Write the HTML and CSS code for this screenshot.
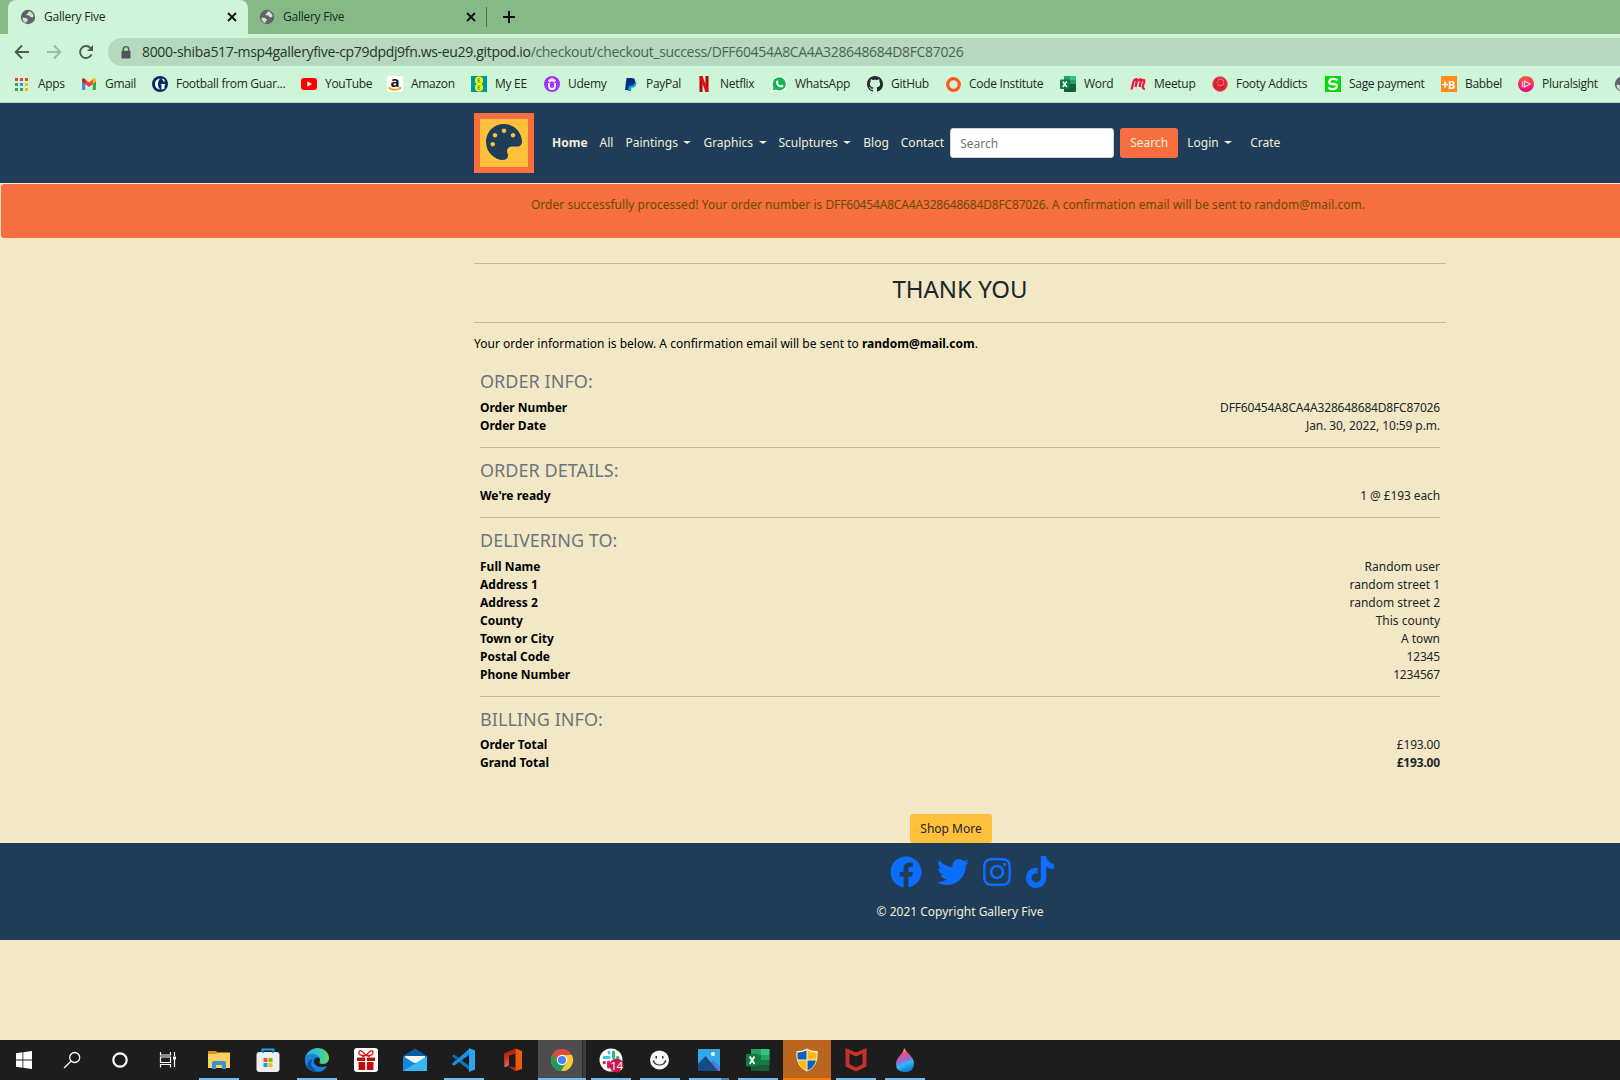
FILE: index.html
```html
<!DOCTYPE html>
<html lang="en">
<head>
<meta charset="utf-8">
<title>Gallery Five</title>
<link rel="stylesheet" href="styles.css">
</head>
<body>
<svg class="defs" width="0" height="0">
  <symbol id="globe" viewBox="0 0 16 16"><circle cx="8" cy="8" r="7.2" fill="#5f6368"/><path class="land" d="M2.6 8.6 6 9l2 1.6-.6 1.5-1 .4v1.6C4 13.500 2.200 11 2.600 8.600zM8.500 2.300c2.800.4 4.900 2.400 5.200 4.900l-1.300 1.200-2-.4L9.300 6.500 7 6.300 6.300 5l2-.9z"/></symbol>
  <symbol id="close" viewBox="0 0 10 10"><path d="M1 1l8 8M9 1l-8 8" stroke="#111" stroke-width="1.9"/></symbol>
</svg>

<div class="tabs">
  <div class="tab active"><svg class="fav"><use href="#globe"/></svg><span>Gallery Five</span><svg class="x"><use href="#close"/></svg></div>
  <div class="tab"><svg class="fav"><use href="#globe"/></svg><span>Gallery Five</span><svg class="x"><use href="#close"/></svg></div>
  <i class="divider"></i>
  <svg class="plus" viewBox="0 0 12 12"><path d="M6 0v12M0 6h12" stroke="#111" stroke-width="2"/></svg>
</div>

<div class="toolbar">
  <svg class="tool" viewBox="0 0 16 16"><path d="M15 8H2M8 1.500 1.700 8 8 14.500" fill="none" stroke="#50585a" stroke-width="1.900"/></svg>
  <svg class="tool" viewBox="0 0 16 16"><path d="M1 8h13M8 1.500 14.300 8 8 14.500" fill="none" stroke="#9eb9a4" stroke-width="1.900"/></svg>
  <svg class="tool" viewBox="0 0 16 16"><path d="M13.600 10.300A6 6 0 1 1 12.400 3.900" fill="none" stroke="#50585a" stroke-width="1.900"/><path d="M15 1v6H9z" fill="#50585a"/></svg>
  <div class="omnibox">
    <svg class="lock" viewBox="0 0 10 13"><path d="M2.200 6V3.400a2.800 2.800 0 0 1 5.600 0V6" fill="none" stroke="#505558" stroke-width="1.400"/><rect x=".5" y="4.800" width="9" height="7.700" rx="1" fill="#505558"/></svg>
    <span class="url"><b>8000-shiba517-msp4galleryfive-cp79dpdj9fn.ws-eu29.gitpod.io</b>/checkout/checkout_success/DFF60454A8CA4A328648684D8FC87026</span>
  </div>
</div>

<div class="bookmarks">
  <a><svg viewBox="0 0 16 16"><path fill="#ea4335" d="M1 2h3v3H1zM6 2h3v3H6zM11 2h3v3h-3z"/><path fill="#34a853" d="M1 7h3v3H1zM1 12h3v3H1z"/><path fill="#4285f4" d="M6 7h3v3H6z"/><path fill="#fbbc04" d="M11 7h3v3h-3zM11 12h3v3h-3z"/><path fill="#34a853" d="M6 12h3v3H6z"/></svg>Apps</a>
  <a><svg viewBox="0 0 16 16"><path fill="#4285f4" d="M1 4l3.300 2.500V14H2q-1 0-1-1z"/><path fill="#34a853" d="M15 4l-3.300 2.500V14H14q1 0 1-1z"/><path fill="#ea4335" d="M3 2.500l5 4 5-4v4.700l-5 3.800-5-3.800z"/><path fill="#c5221f" d="M1 4q0-3 3.300-1v5L1 5.500z"/><path fill="#fbbc04" d="M15 4q0-3-3.300-1v5L15 5.500z"/></svg>Gmail</a>
  <a><svg viewBox="0 0 16 16"><circle cx="8" cy="8" r="8" fill="#052962"/><path d="M8.500 2.500Q3 3 3 8t5.500 5.500Q6 12 6 8t2.500-5.500zM9.500 2.500q2 .3 3 1.200v2.200h-.7Q11 3.500 9.500 2.700zM8.500 8h4.800v.6l-.8.4v3.400q-1.300.9-3 1.100V8.900z" fill="#fff"/></svg>Football from Guar...</a>
  <a><svg viewBox="0 0 16 16"><rect y="2" width="16" height="12" rx="3" fill="#f00"/><path d="M6.300 5.300v5.400L11 8z" fill="#fff"/></svg>YouTube</a>
  <a><svg viewBox="0 0 16 16"><rect width="16" height="16" rx="2" fill="#fff"/><text x="3.600" y="10.500" font-size="15" font-weight="700" fill="#111">a</text><path d="M1.500 11.500q6 4.500 12 .6" fill="none" stroke="#f90" stroke-width="1.600"/><path d="M11.500 11.200l3-.4-.8 3z" fill="#f90"/></svg>Amazon</a>
  <a><svg viewBox="0 0 16 16"><path fill="#00979d" d="M0 0h16v16H0z"/><circle cx="8" cy="4.500" r="4" fill="#fdf200"/><circle cx="8" cy="11.500" r="4" fill="#fdf200"/><path d="M9.500 2.800H7v3.300h2.500M7 4.500h2M9.500 9.900H7v3.300h2.500M7 11.500h2" stroke="#5aa66a" fill="none"/></svg>My EE</a>
  <a><svg viewBox="0 0 16 16"><circle cx="8" cy="8" r="8" fill="#a435f0"/><path d="M5 7v3q0 3 3 3t3-3V7M5 5.800 8 4l3 1.800" stroke="#fff" stroke-width="1.800" fill="none"/><path d="M4 4.700 8 2.500l4 2.200" stroke="#fff" fill="none"/></svg>Udemy</a>
  <a><svg viewBox="0 0 16 16"><path d="M6 5h7q2 1 1 4-1 2.800-4.500 2.800L9 15H5.500z" fill="#179bd7"/><path d="M4.500 2H10q3.700.3 3 4-.8 3.700-4.800 3.800H7L6.200 14H3z" fill="#002f86"/></svg>PayPal</a>
  <a><svg viewBox="0 0 16 16"><path d="M3.500 0h3v16h-3zM9.500 0h3v16h-3z" fill="#b1060f"/><path d="M3.500 0h3l6 16h-3z" fill="#e50914"/></svg>Netflix</a>
  <a><svg viewBox="0 0 16 16"><path d="M.3 15.700l1.200-4.500A7.700 7.700 0 1 1 5 14.700z" fill="#fff"/><circle cx="8.200" cy="7.900" r="6.600" fill="#12b84b"/><path d="M1.500 14.500l1.300-4 2.600 2.800z" fill="#12b84b"/><path d="M5.700 4.500l1.200-.1.700 2-.7.9q1 1.700 2.700 2.300l.9-1 2 .9q-.2 2-2.500 2Q6 10.500 5 7.200q-.2-1.800.7-2.700z" fill="#fff"/></svg>WhatsApp</a>
  <a><svg viewBox="0 0 16 16"><path fill="#24292f" d="M8 0C3.580 0 0 3.580 0 8c0 3.540 2.290 6.530 5.470 7.590.4.070.55-.17.55-.38 0-.19-.01-.82-.01-1.490-2.010.37-2.530-.49-2.690-.94-.09-.23-.48-.94-.82-1.130-.28-.15-.68-.52-.01-.53.63-.01 1.080.58 1.230.82.72 1.210 1.870.87 2.330.66.070-.52.28-.87.51-1.070-1.780-.2-3.640-.89-3.640-3.950 0-.87.31-1.590.82-2.150-.08-.2-.36-1.020.08-2.120 0 0 .67-.21 2.200.82.64-.18 1.320-.27 2-.27s1.360.09 2 .27c1.530-1.040 2.200-.82 2.200-.82.44 1.100.16 1.920.08 2.120.51.56.82 1.270.82 2.150 0 3.070-1.870 3.750-3.650 3.950.29.25.54.73.54 1.480 0 1.070-.01 1.930-.01 2.200 0 .21.15.46.55.38A8.010 8.010 0 0 0 16 8c0-4.420-3.580-8-8-8z"/></svg>GitHub</a>
  <a><svg viewBox="0 0 16 16"><circle cx="8.500" cy="8.500" r="5.800" fill="none" stroke="#ff5722" stroke-width="3.200"/></svg>Code Institute</a>
  <a><svg viewBox="0 0 16 16"><rect x="4" width="12" height="16" rx="1" fill="#185c37"/><path fill="#21a366" d="M4 0h6v4H4z"/><path fill="#33c481" d="M10 0h6v4h-6z"/><path fill="#107c41" d="M4 4h6v8H4z"/><path fill="#21a366" d="M10 4h6v4h-6z"/><rect y="3.500" width="9.500" height="9.500" rx="1" fill="#107c41"/><path d="M2.800 5.500l4 5.500M6.800 5.500l-4 5.500" stroke="#fff" stroke-width="1.500"/></svg>Word</a>
  <a><svg viewBox="0 0 16 16"><path d="M1.500 13.500 4 4.500q3.200-2.500 3 0L5.500 11M7.500 5q3.700-3.200 3.500-.5L9.500 11M11.300 5q3.500-2.500 3 .5l-1.500 5q-.5 2 2 2.500" fill="none" stroke="#ed1c40" stroke-width="2.300"/></svg>Meetup</a>
  <a><svg viewBox="0 0 16 16"><circle cx="8" cy="8" r="7.500" fill="#dc2637" stroke="#e9808a"/><circle cx="8.500" cy="6.500" r="3.300" fill="none" stroke="#f0808b"/><path d="M3 12q1-6 3-4M9 11l4 2M3 4l3 1" stroke="#b61c2d" fill="none"/></svg>Footy Addicts</a>
  <a><svg viewBox="0 0 16 16"><path fill="#00dc06" d="M0 0h16v16H0z"/><path d="M12.500 4.600Q11 2.800 8 2.800T4.300 5.300 8 8t3.900 2.600T8 13.200t-4.600-2" stroke="#fff" stroke-width="2.300" fill="none"/></svg>Sage payment</a>
  <a><svg viewBox="0 0 16 16"><path fill="#ff8c14" d="M0 0h16v16H0z"/><path d="M1 8.500h6M4 5.500v6" stroke="#fff" stroke-width="1.700"/><text x="7" y="12.500" font-size="11" font-weight="700" fill="#fff">B</text></svg>Babbel</a>
  <a><svg viewBox="0 0 16 16"><defs><linearGradient id="ps" x2="0" y2="1"><stop stop-color="#f0603a"/><stop offset="1" stop-color="#ec008c"/></linearGradient></defs><circle cx="8" cy="8" r="8" fill="url(#ps)"/><path d="M6.500 5l5.500 3-5.500 3zM4.500 5.500v5l1-.5" fill="none" stroke="#ffd5dc" stroke-width="1.200"/></svg>Pluralsight</a>
  <a><svg viewBox="0 0 16 16"><use href="#globe" width="16" height="16"/></svg></a>
</div>

<header class="navbar">
  <div class="logo"><svg viewBox="0 0 512 512"><path fill="#1f3d58" d="M204.300 5C104.900 24.400 24.800 104.300 5.200 203.400c-37 187 131.700 326.400 258.800 306.700 41.200-6.400 61.400-54.600 42.500-91.700-23.100-45.400 9.900-98.400 60.900-98.400h79.700c35.800 0 64.800-29.600 64.900-65.300C511.500 97.100 368.100-26.900 204.300 5zM96 320c-17.700 0-32-14.300-32-32s14.300-32 32-32 32 14.300 32 32-14.300 32-32 32zm32-128c-17.700 0-32-14.300-32-32s14.300-32 32-32 32 14.300 32 32-14.300 32-32 32zm128-64c-17.700 0-32-14.300-32-32s14.300-32 32-32 32 14.300 32 32-14.300 32-32 32zm128 64c-17.700 0-32-14.300-32-32s14.300-32 32-32 32 14.300 32 32-14.300 32-32 32z"/></svg></div>
  <nav>
    <a class="home">Home</a><a>All</a><a class="drop">Paintings</a><a class="drop">Graphics</a><a class="drop">Sculptures</a><a>Blog</a><a>Contact</a>
  </nav>
  <input class="search" placeholder="Search">
  <button class="btn-search">Search</button>
  <nav class="account"><a class="drop">Login</a><a>Crate</a></nav>
</header>

<div class="alert"><span>Order successfully processed! Your order number is <span class="num">DFF60454A8CA4A328648684D8FC87026</span>. A confirmation email will be sent to random@mail.com.</span></div>

<main>
  <h2>THANK YOU</h2>
  <p class="intro">Your order information is below. A confirmation email will be sent to <strong>random@mail.com</strong>.</p>
  <section><h4>ORDER INFO:</h4>
    <div class="row"><b>Order Number</b><span class="num">DFF60454A8CA4A328648684D8FC87026</span></div>
    <div class="row"><b>Order Date</b><span class="date">Jan. 30, 2022, 10:59 p.m.</span></div>
  </section>
  <section><h4>ORDER DETAILS:</h4>
    <div class="row"><b>We're ready</b><span class="date">1 @ £193 each</span></div>
  </section>
  <section><h4>DELIVERING TO:</h4>
    <div class="row"><b>Full Name</b><span>Random user</span></div>
    <div class="row"><b>Address 1</b><span>random street 1</span></div>
    <div class="row"><b>Address 2</b><span>random street 2</span></div>
    <div class="row"><b>County</b><span>This county</span></div>
    <div class="row"><b>Town or City</b><span>A town</span></div>
    <div class="row"><b>Postal Code</b><span class="num">12345</span></div>
    <div class="row"><b>Phone Number</b><span class="num">1234567</span></div>
  </section>
  <section><h4>BILLING INFO:</h4>
    <div class="row"><b>Order Total</b><span class="num">£193.00</span></div>
    <div class="row"><b>Grand Total</b><b class="total num">£193.00</b></div>
  </section>
  <button class="shop">Shop More</button>
</main>

<footer>
  <div class="social">
    <svg width="32" viewBox="0 0 512 512"><path d="M504 256C504 119 393 8 256 8S8 119 8 256c0 123.780 90.690 226.380 209.250 245V327.690h-63V256h63v-54.640c0-62.150 37-96.480 93.670-96.480 27.140 0 55.520 4.840 55.520 4.840v61h-31.280c-30.800 0-40.410 19.120-40.410 38.730V256h68.780l-11 71.690h-57.780V501C413.310 482.380 504 379.780 504 256z"/></svg>
    <svg width="32" viewBox="0 0 512 512"><path d="M459.370 151.716c.325 4.548.325 9.097.325 13.645 0 138.720-105.583 298.558-298.558 298.558-59.452 0-114.680-17.219-161.137-47.106 8.447.974 16.568 1.299 25.340 1.299 49.055 0 94.213-16.568 130.274-44.832-46.132-.975-84.792-31.188-98.112-72.772 6.498.974 12.995 1.624 19.818 1.624 9.421 0 18.843-1.300 27.614-3.573-48.081-9.747-84.143-51.980-84.143-102.985v-1.299c13.969 7.797 30.214 12.670 47.431 13.319-28.264-18.843-46.781-51.005-46.781-87.391 0-19.492 5.197-37.360 14.294-52.954 51.655 63.675 129.300 105.258 216.365 109.807-1.624-7.797-2.599-15.918-2.599-24.040 0-57.828 46.782-104.934 104.934-104.934 30.213 0 57.502 12.670 76.670 33.137 23.715-4.548 46.456-13.320 66.599-25.340-7.798 24.366-24.366 44.833-46.132 57.827 21.117-2.273 41.584-8.122 60.426-16.243-14.292 20.791-32.161 39.308-52.628 54.253z"/></svg>
    <svg width="28" viewBox="0 0 448 512"><path d="M224.100 141c-63.600 0-114.900 51.300-114.900 114.900s51.300 114.900 114.900 114.900S339 319.500 339 255.900 287.700 141 224.100 141zm0 189.600c-41.100 0-74.700-33.500-74.700-74.700s33.500-74.700 74.700-74.700 74.700 33.500 74.700 74.700-33.600 74.700-74.700 74.700zm146.400-194.300c0 14.900-12 26.800-26.800 26.800-14.900 0-26.800-12-26.800-26.800s12-26.800 26.800-26.800 26.800 12 26.800 26.800zm76.100 27.200c-1.700-35.900-9.900-67.700-36.200-93.900-26.200-26.200-58-34.400-93.900-36.200-37-2.100-147.900-2.100-184.900 0-35.800 1.700-67.600 9.900-93.900 36.100s-34.400 58-36.200 93.900c-2.100 37-2.100 147.900 0 184.900 1.700 35.900 9.900 67.700 36.200 93.900s58 34.400 93.900 36.200c37 2.100 147.900 2.100 184.900 0 35.900-1.700 67.700-9.900 93.900-36.200 26.200-26.200 34.400-58 36.200-93.900 2.100-37 2.100-147.800 0-184.800zM398.800 388c-7.800 19.600-22.900 34.700-42.600 42.600-29.500 11.700-99.500 9-132.100 9s-102.700 2.600-132.100-9c-19.600-7.800-34.700-22.900-42.600-42.600-11.700-29.500-9-99.500-9-132.100s-2.600-102.700 9-132.100c7.800-19.600 22.900-34.700 42.600-42.600 29.500-11.700 99.500-9 132.100-9s102.700-2.600 132.100 9c19.600 7.800 34.700 22.900 42.600 42.600 11.700 29.500 9 99.500 9 132.100s2.700 102.700-9 132.100z"/></svg>
    <svg width="28" viewBox="0 0 448 512"><path d="M448 209.910a210.060 210.060 0 0 1-122.770-39.250V349.380A162.550 162.550 0 1 1 185 188.310V278.200a74.620 74.620 0 1 0 52.230 71.180V0h88a121.180 121.180 0 0 0 1.860 22.170A122.180 122.180 0 0 0 381 102.390a121.430 121.430 0 0 0 67 20.140z"/></svg>
  </div>
  <p>© 2021 Copyright Gallery Five</p>
</footer>

<div class="taskbar">
  <div class="sys"><svg viewBox="0 0 24 24"><path fill="#fff" d="M4 5.200 10.500 4.300v7.200H4zM11.300 4.200 20 3v8.500h-8.700zM4 12.400h6.500v7.300L4 18.800zM11.300 12.400H20V21l-8.700-1.200z"/></svg></div>
  <div class="sys"><svg viewBox="0 0 24 24"><g fill="none" stroke="#fff" stroke-width="1.300"><circle cx="14.700" cy="9.500" r="5"/><path d="M11.200 13 4 20"/></g></svg></div>
  <div class="sys"><svg viewBox="0 0 24 24"><circle cx="12" cy="12" r="6.700" fill="none" stroke="#fff" stroke-width="2.200"/></svg></div>
  <div class="sys"><svg viewBox="0 0 24 24"><g fill="none" stroke="#fff" stroke-width="1.200"><path d="M4.500 4v3h10V4M4.500 19.500v-3h10v3M4.500 9h10v5.500h-10zM18.500 4v4M18.500 11.500V19"/></g><path fill="#fff" d="M17 8.500h3v3h-3z"/></svg></div>

  <div class="app run"><svg viewBox="0 0 24 24"><path fill="#d99411" d="M1 3h8l2 2v3H1z"/><path fill="#ffd160" d="M1 6h8l2-1.500h12V20H1z"/><path fill="#3c8fd2" d="M5 21v-6q0-2 2-2h10q2 0 2 2v6h-4v-4H9v4z"/></svg></div>
  <div class="app"><svg viewBox="0 0 24 24"><path d="M6.500 6V1.500h11V6" fill="none" stroke="#20a4e8" stroke-width="2"/><rect x=".5" y="4" width="23" height="20" rx="3" fill="#eee"/><path d="M7 5V2M17 5V2" stroke="#0f7fc8" stroke-width="1.800"/><path fill="#f25022" d="M7.500 10h4v4h-4z"/><path fill="#7fba00" d="M12.500 10h4v4h-4z"/><path fill="#00a4ef" d="M7.500 15h4v4h-4z"/><path fill="#ffb900" d="M12.500 15h4v4h-4z"/></svg></div>
  <div class="app run"><svg viewBox="0 0 24 24"><defs><linearGradient id="e1"><stop stop-color="#2aa7e4"/><stop offset=".6" stop-color="#36c9bd"/><stop offset="1" stop-color="#63d95a"/></linearGradient></defs><path d="M0 12C0 5 6 0 12.500 0 19 0 24 4.500 24 10c0 4-3 6-6.500 6-2.500 0-3.500-1-3-2 1.200-2 .8-6-4.500-6Q4 8 0 12z" fill="url(#e1)"/><path d="M0 12q1-6 7-6 6.500 0 8 5Q13 8.500 10.500 10 8 12 9.500 15.500 12 20 19 18.700q3-1 3-.2-3.500 5.500-9.500 5.500Q0 23.500 0 12z" fill="#1683d8"/><path d="M7.500 11q-3 5 .5 9 3 3.500 7 3.500-8 2-12.500-5Q2 12 7.500 11z" fill="#0b529e"/></svg></div>
  <div class="app"><svg viewBox="0 0 24 24"><rect width="24" height="24" rx="3" fill="#fff"/><path fill="#b90f0f" d="M3 9.500h8.200V13H3zM12.800 9.500H21V13h-8.200zM4.500 14h6.700v8H4.500zM12.800 14h6.700v8h-6.700z"/><path d="M12 7.500Q4 8 5 4t7 3.500q6-7.500 7-3.500t-7 3.500zM11.500 7.500 8 9M12.500 7.500 16 9" fill="none" stroke="#d11" stroke-width="1.300"/></svg></div>
  <div class="app"><svg viewBox="0 0 24 24"><path fill="#0c59a4" d="M0 8 12 .5 24 8v4H0z"/><path fill="#f5f5f5" d="M2 8h20v7H2z"/><path fill="#1687d8" d="M0 8l12 7.500V23H0z"/><path fill="#36b8f2" d="M24 8 0 23h24z"/></svg></div>
  <div class="app run"><svg viewBox="0 0 24 24"><path fill="#0b75bc" d="M0 8l2-1.500 16 12V23L1 9zM0 16l2 1.500 5-4-2-3z"/><path fill="#1d8fdb" d="M0 16 17 1v6L2 17.500z"/><path fill="#2aa5f0" d="M17 0l6 2.500v19L17 24z"/></svg></div>
  <div class="app"><svg viewBox="0 0 24 24"><defs><linearGradient id="of" x2="0" y2="1"><stop stop-color="#a51c12"/><stop offset=".6" stop-color="#d83b1a"/><stop offset="1" stop-color="#e36a7a"/></linearGradient></defs><path fill="url(#of)" d="M3 5.500 14.500.5v5L8 7.500v10L3.500 19.500z"/><path fill="#c5281c" d="M7 18.500l7.500 1V23z"/><path fill="#ee5a0b" d="M14.500.5 21 3v18l-6.500 2z"/></svg></div>
  <div class="app run current"><svg viewBox="0 0 24 24"><circle cx="12" cy="12" r="11" fill="#4caf50"/><path fill="#e04a3c" d="M2.500 6.500A11 11 0 0 1 21.500 6.500L12 7.500l-4 7z"/><path fill="#fcc934" d="M12 7h9.800A11 11 0 0 1 11 23l6-8.500z"/><path fill="#1f9d58" d="M2.500 6.500 7.700 14.500Q10 17.500 14 17L11 23A11 11 0 0 1 2.500 6.500z"/><circle cx="12" cy="12" r="5.200" fill="#fff"/><circle cx="12" cy="12" r="4.100" fill="#4285f4"/></svg></div>
  <div class="app run"><svg viewBox="0 0 24 24"><circle cx="12" cy="12" r="11.500" fill="#fff"/><g stroke-width="3" stroke-linecap="round"><path d="M5 9.500h5M10 4v1" stroke="#36c5f0"/><path d="M14.500 4v5.500M18.500 9.500h.5" stroke="#2eb67d"/><path d="M9.500 14v5M5 14.500h.5" stroke="#e01e5a"/></g><circle cx="17.500" cy="17.500" r="7" fill="#c9184f"/><text x="11.400" y="21.500" font-size="11" fill="#fff">14</text></svg></div>
  <div class="app run"><svg viewBox="0 0 24 24"><circle cx="11.500" cy="12" r="9.500" fill="#f7f7f7"/><g fill="none" stroke="#333" stroke-width="1.200"><path d="M5.500 13q1.500 4 6 4t6-4M4.800 13.500l1.500-1M18.200 13.500l-1.500-1"/></g><path d="M7.500 8H9v2.500H7.500zM14 8h1.500v2.500H14z" fill="#333"/></svg></div>
  <div class="app run photos"><svg viewBox="0 0 24 24"><path fill="#31a8ec" d="M1 1h22v22H1z"/><path fill="#4f78cf" d="M12 16l4-4 7 7v4h-8z"/><path fill="#174b86" d="M1 16l7.500-8L21 23H1z"/><circle cx="16" cy="6" r="2" fill="#fff"/></svg></div>
  <div class="app run"><svg viewBox="0 0 24 24"><path fill="#185c37" d="M5 1h18.500v22H5z"/><path fill="#21a366" d="M5 1h9.500v6H5zM14.500 7h9v5h-9z"/><path fill="#33c481" d="M14.500 1h9v6h-9z"/><path fill="#107c41" d="M5 7h9.500v10H5zM14.500 12h9v5h-9z"/><path fill="#117a40" d="M0 6h12v12.500H0z"/><path d="M3.700 8.500l4.800 7.500M8.500 8.500 3.700 16" stroke="#fff" stroke-width="1.800"/></svg></div>
  <div class="app run alerting"><svg viewBox="0 0 24 24"><path fill="#fff3c4" d="M12 .5q5 3 10.500 2.500Q24 18 12 23.500 0 18 1.500 3 7 3.500 12 .5z"/><path fill="#0b5fc0" d="M11.500 2.200q-4.500 2.500-9 2.200-.4 4 .4 7h8.600z"/><path fill="#fdb813" d="M12.500 2.200q4.500 2.500 9 2.200.4 4-.4 7h-8.600zM3 12.500h8.500v10q-6.500-3-8.500-10z"/><path fill="#0b5fc0" d="M21 12.500h-8.500v10q6.500-3 8.500-10z"/></svg></div>
  <div class="app run"><svg viewBox="0 0 24 24"><path fill="#c9302c" d="M1.500 0 12 4.500 22.500 0v18.500L12 23.500 1.500 18.500zM5.500 5.500v10.800L12 19.500l6.500-3.200V5.500L12 8.500z"/></svg></div>
  <div class="app run"><svg viewBox="0 0 24 24"><defs><linearGradient id="pt" x2=".3" y2="1"><stop offset=".15" stop-color="#ffca1f"/><stop offset=".35" stop-color="#f0468d"/><stop offset=".6" stop-color="#8f6fd8"/><stop offset=".75" stop-color="#35b8f5"/><stop offset="1" stop-color="#1683d8"/></linearGradient></defs><path fill="url(#pt)" d="M11 0q2 3 5 6 5 5 5 9.500 0 8.500-9 8.500t-9-8q0-4 4-8.500 4-4 4-7.500z"/></svg></div>
</div>
</body>
</html>
```
FILE: styles.css
```css
* { box-sizing: border-box; }
body {
  margin: 0;
  height: 1080px;
  overflow: hidden;
  display: flex;
  flex-direction: column;
  background: #f2e8c6;
  font: 12px/18px "Noto Sans", sans-serif;
  color: #212529;
}
svg { display: block; flex: none; overflow: visible; }
.defs { position: absolute; }
p, h2, h4 { margin: 0; font-weight: 400; }

/* browser window */
.tabs, .toolbar, .bookmarks {
  flex: none;
  display: flex;
  align-items: center;
  font-family: "Open Sans", sans-serif;
  color: #1c2a20;
}
.tabs { height: 34px; padding-left: 8px; background: #85b985; }
.tab { display: flex; align-items: center; width: 239px; height: 34px; padding: 0 11px 0 11px; letter-spacing: -.25px; }
.tab.active { padding-left: 12px; background: #cef5d8; border-radius: 8px 8px 0 0; width: 240px; }
.tab span { flex: 1; margin-left: 8px; }
.fav { width: 16px; height: 16px; }
.land { fill: #cfe4d1; }
.x { width: 10px; height: 10px; }
.divider { width: 1px; height: 20px; margin: 0 16px 0 -1px; background: #4c6f50; }
.plus { width: 12px; height: 12px; }
.toolbar { height: 34px; padding: 2px 0 0 14px; background: #cef5d8; gap: 16px; }
.tool { width: 16px; height: 16px; }
.omnibox { flex: 1; height: 28px; margin: 0 -20px 0 -2px; padding-left: 13px; display: flex; align-items: center; gap: 11px; background: #b6d8bc; border-radius: 14px 0 0 14px; }
.lock { width: 10px; height: 13px; }
.url { font-size: 14px; letter-spacing: -.328px; white-space: nowrap; color: #4d6455; }
.url b { font-weight: 400; color: #26352b; }
.bookmarks { height: 35px; padding: 0 0 2px 14px; border-bottom: 1px solid #b2d3b9; background: #cef5d8; }
.bookmarks a { flex: none; display: flex; align-items: center; gap: 8px; letter-spacing: -.3px; white-space: nowrap; }
.bookmarks svg { width: 16px; height: 16px; font-family: "Open Sans", sans-serif; letter-spacing: 0; }
.bookmarks a:nth-child(1) { width: 67px; }
.bookmarks a:nth-child(2) { width: 71px; }
.bookmarks a:nth-child(3) { width: 149px; }
.bookmarks a:nth-child(4) { width: 86px; }
.bookmarks a:nth-child(5) { width: 84px; }
.bookmarks a:nth-child(6) { width: 73px; }
.bookmarks a:nth-child(7) { width: 78px; }
.bookmarks a:nth-child(8) { width: 74px; }
.bookmarks a:nth-child(9) { width: 75px; }
.bookmarks a:nth-child(10) { width: 96px; }
.bookmarks a:nth-child(11) { width: 78px; }
.bookmarks a:nth-child(12) { width: 115px; }
.bookmarks a:nth-child(13) { width: 70px; }
.bookmarks a:nth-child(14) { width: 82px; }
.bookmarks a:nth-child(15) { width: 113px; }
.bookmarks a:nth-child(16) { width: 116px; }
.bookmarks a:nth-child(17) { width: 77px; }
.bookmarks a:nth-child(18) { width: 96px; }

/* site header */
.navbar { flex: none; height: 80px; padding-left: 474px; display: flex; align-items: center; background: #1f3d58; color: #f5efd9; }
.logo { width: 60px; height: 60px; padding: 5px 6px; border: 6px solid #f76f40; background: #ffc13b; }
.logo svg { width: 36px; height: 36px; }
nav { display: flex; gap: 12px; margin-left: 18px; }
.home { font-weight: 700; }
.drop::after { content: ""; display: inline-block; margin-left: 5.500px; vertical-align: 3px; border: 4px solid transparent; border-top-width: 3.600px; border-top-color: currentColor; border-bottom: 0; }
.search { width: 164px; height: 30px; margin: 0 6px; padding: 0 9px; border: 1px solid #ced4da; border-radius: 3px; font: inherit; }
.search::placeholder { color: #6c757d; }
.btn-search { width: 58px; height: 30px; padding: 0; border: 0; border-radius: 3px; background: #f76f40; color: #f5efd9; font: inherit; }
.account { margin-left: 9px; gap: 18px; }

.alert { flex: none; height: 54px; margin: 1px 0 0 1px; padding: 12px 0 0 275px; border-radius: 3px 0 0 3px; background: #f76f40; color: #664d03; text-align: center; letter-spacing: .02px; }
.num, .alert .num { letter-spacing: -.17px; }
.date { letter-spacing: -.1px; }

/* order summary */
main { flex: none; width: 972px; height: 605px; margin-left: 474px; display: flex; flex-direction: column; }
h2 { margin-top: 25px; height: 60px; padding-top: 10px; border: solid #c1ba9f; border-width: 1px 0; font-size: 24px; line-height: 29px; text-align: center; }
.intro { margin: 12px 0 18px; color: #000; letter-spacing: .02px; }
section { margin: 0 6px 12px; padding-bottom: 12px; border-bottom: 1px solid #c1ba9f; }
section:last-of-type { border: 0; }
h4 { margin-bottom: 6px; color: #6c757d; font-size: 18px; line-height: 21.600px; letter-spacing: .05px; }
.row { display: flex; justify-content: space-between; }
.row b { color: #000; }
.row .total { color: #212529; }
.shop { width: 82px; height: 29px; margin: auto 0 0 436px; padding: 0; border: 0; border-radius: 3px; background: #ffc13b; font: inherit; color: #212529; }

footer { flex: none; height: 97px; padding-left: 300px; background: #1f3d58; color: #f5efd9; text-align: center; }
.social { display: flex; gap: 14.600px; padding: 13px 0 0 590px; }
.social svg { height: 32px; fill: #0d6efd; }
footer p { margin-top: 15px; }

/* desktop taskbar */
.taskbar { flex: none; height: 40px; margin-top: auto; display: flex; background: #1d1d1d; }
.sys, .app { width: 48px; height: 40px; display: flex; align-items: center; justify-content: center; }
.app { margin-right: 1px; }
.sys + .app { margin-left: 3px; }
.taskbar svg { width: 24px; height: 24px; }
.run { background: linear-gradient(#76b9ed, #76b9ed) center bottom / 40px 2px no-repeat; }
.current { background: linear-gradient(#76b9ed, #76b9ed) bottom / 100% 2px no-repeat, linear-gradient(90deg, #4d4d4d 44px, #2b2b2b 44px 45px, #3d3d3d 45px); }
.photos { background: linear-gradient(90deg, #76b9ed 32px, #5483aa 32px) center bottom / 40px 2px no-repeat; }
.alerting { background: linear-gradient(#ff7a00, #ff7a00) bottom / 100% 2px no-repeat, #b9651f; }
```
